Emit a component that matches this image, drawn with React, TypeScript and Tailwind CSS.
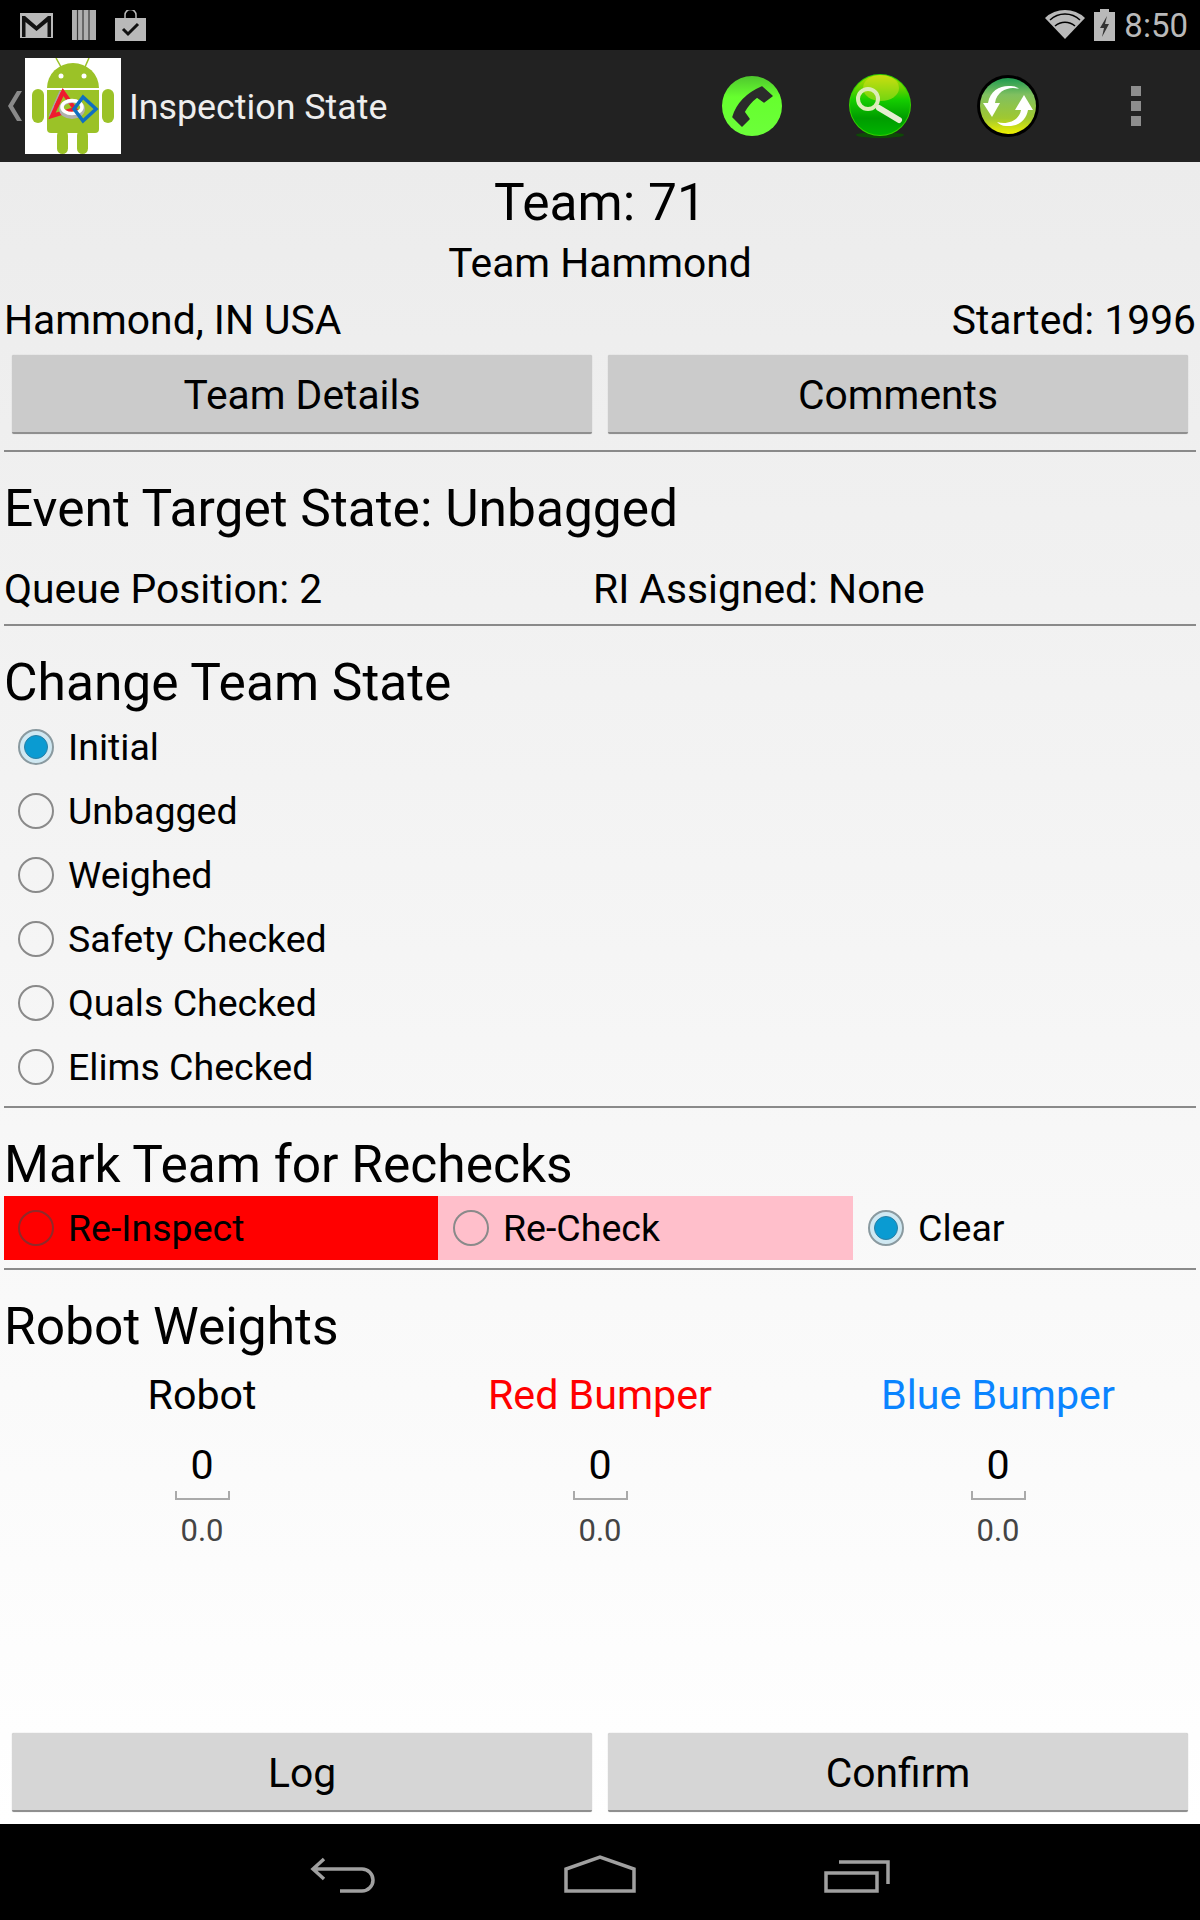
import React from "react";

function Radio({ checked, dark }: { checked?: boolean; dark?: boolean }) {
  if (checked) {
    return (
      <span className="flex h-[36px] w-[36px] shrink-0 items-center justify-center rounded-full border-2 border-[#8a9aa0] bg-[#cfe8f2]">
        <span className="h-[24px] w-[24px] rounded-full border border-[#2a7fa5] bg-[#0a9bd2]" />
      </span>
    );
  }
  return <span className={`h-[36px] w-[36px] shrink-0 rounded-full border-2 ${dark ? "border-[#8f2a2a]" : "border-[#8a8a8a]"}`} />;
}

function RadioRow({ label, checked }: { label: string; checked?: boolean }) {
  return (
    <div className="flex h-[64px] shrink-0 items-center gap-[14px] pl-[18px] text-[37.5px]">
      <Radio checked={checked} />
      <span>{label}</span>
    </div>
  );
}

function Btn({ label, light }: { label: string; light?: boolean }) {
  return (
    <div className={`flex h-[79px] flex-1 items-center justify-center rounded-[2px] border-b-2 border-[#8f8f8f] pt-[4px] text-[40.8px] shadow-[0_0_1px_#aaaaaa] ${light ? "bg-[#d6d6d6]" : "bg-[#cbcbcb]"}`}>
      {label}
    </div>
  );
}

function Rule() {
  return <div className="mx-[4px] h-[2px] shrink-0 bg-[#8a8a8a]" />;
}

function Weight({ label, color }: { label: string; color: string }) {
  return (
    <div className="flex flex-1 flex-col items-center">
      <div className={`flex h-[52px] items-center text-[41.2px] ${color}`}>{label}</div>
      <div className="mt-[19px] flex h-[50px] items-center text-[41.2px]">0</div>
      <div className="h-[9px] w-[55px] border-x-2 border-b-2 border-[#aaaaaa]" />
      <div className="mt-[11px] text-[31px] leading-[40px] text-[#444444]">0.0</div>
    </div>
  );
}

function AppLogo() {
  return (
    <svg viewBox="0 0 96 96" className="h-[96px] w-[96px] shrink-0 bg-white">
      <path d="M31 0l5 9M64 0l-4 9" stroke="#9bc227" strokeWidth="1.500" />
      <path d="M22 30a26 25 0 0 1 52 0z" fill="#9bc227" />
      <circle cx="36" cy="18" r="2.500" fill="#fff" />
      <circle cx="59" cy="18" r="2.500" fill="#fff" />
      <rect x="7" y="31" width="12" height="34" rx="6" fill="#9bc227" />
      <rect x="77" y="31" width="12" height="34" rx="6" fill="#9bc227" />
      <path d="M22 32h52v39a4 4 0 0 1-4 4H26a4 4 0 0 1-4-4z" fill="#9bc227" />
      <rect x="32" y="72" width="11" height="24" rx="5.500" fill="#9bc227" />
      <rect x="52" y="72" width="11" height="24" rx="5.500" fill="#9bc227" />
      <path d="M36 33L25 58" stroke="#a8a8a8" strokeWidth="3" />
      <path d="M38 34L27 58l23-7z" fill="none" stroke="#ee1c2e" strokeWidth="4" />
      <ellipse cx="47" cy="51" rx="11" ry="8" fill="none" stroke="#b0b0b0" strokeWidth="4" />
      <ellipse cx="47" cy="49" rx="10" ry="6.500" fill="none" stroke="#ffffff" strokeWidth="3.500" />
      <path d="M38 34L31 49" stroke="#ee1c2e" strokeWidth="4" />
      <path d="M58 39l13 12-13 12-9-12z" fill="none" stroke="#0f6fc0" strokeWidth="3.500" />
    </svg>
  );
}

function PhoneIcon() {
  return (
    <svg viewBox="0 0 62 62" className="h-[62px] w-[62px]">
      <defs>
        <linearGradient id="ph" x1="0" y1="0" x2="0" y2="1">
          <stop offset="0" stopColor="#4fc62e" />
          <stop offset="0.35" stopColor="#66ff2e" />
          <stop offset="1" stopColor="#6cff3a" />
        </linearGradient>
      </defs>
      <circle cx="31" cy="31" r="30" fill="url(#ph)" />
      <path d="M41 12L51 21 43 27 36 22Q28 28 23 37L28 44 21 51 12 42Q18 22 41 12z" fill="#2b2b2b" stroke="#2b2b2b" strokeWidth="1.500" strokeLinejoin="round" />
    </svg>
  );
}

function SearchIcon() {
  return (
    <svg viewBox="0 0 64 66" className="h-[66px] w-[64px]">
      <defs>
        <linearGradient id="se" x1="0" y1="0" x2="0" y2="1">
          <stop offset="0" stopColor="#c0dc00" />
          <stop offset="0.42" stopColor="#14cc00" />
          <stop offset="0.72" stopColor="#009c00" />
          <stop offset="1" stopColor="#00b400" />
        </linearGradient>
      </defs>
      <ellipse cx="32" cy="62" rx="24" ry="3" fill="#0e4a06" />
      <circle cx="32" cy="32" r="31" fill="#33d000" />
      <circle cx="32" cy="32" r="30" fill="url(#se)" />
      <ellipse cx="33" cy="15" rx="18" ry="13" fill="#d8e020" opacity="0.500" />
      <circle cx="20" cy="26" r="10" fill="none" stroke="#dcecb8" strokeWidth="4" />
      <path d="M31 35l20 12" stroke="#e6eed2" strokeWidth="6" strokeLinecap="round" />
    </svg>
  );
}

function RefreshIcon() {
  return (
    <svg viewBox="0 0 62 62" className="h-[62px] w-[62px]">
      <defs>
        <linearGradient id="re" x1="0" y1="0" x2="0" y2="1">
          <stop offset="0" stopColor="#1e9a50" />
          <stop offset="0.3" stopColor="#80c060" />
          <stop offset="0.72" stopColor="#a0c830" />
          <stop offset="1" stopColor="#f0f000" />
        </linearGradient>
      </defs>
      <circle cx="31" cy="31" r="31" fill="#000" />
      <circle cx="31" cy="31" r="28" fill="url(#re)" />
      <path d="M11 28C13 15 24 10 34 11c3 0 6 1 8 3-9-3-22 1-24 14z" fill="#fff" />
      <path d="M6 28h17l-8 14z" fill="#fff" />
      <path d="M51 35C49 47 39 52 29 51c-4 0-7-2-9-4 10 3 22-1 24-12z" fill="#fff" />
      <path d="M38 35l9-15 9 15z" fill="#fff" />
    </svg>
  );
}

function Overflow() {
  return (
    <div className="flex flex-col gap-[5px]">
      <span className="h-[10px] w-[10px] bg-[#8e8e8e]" />
      <span className="h-[10px] w-[10px] bg-[#8e8e8e]" />
      <span className="h-[10px] w-[10px] bg-[#8e8e8e]" />
    </div>
  );
}

export default function App() {
  return (
    <div className="flex h-[1920px] w-[1200px] flex-col overflow-hidden bg-black text-black" style={{ fontFamily: "Roboto, sans-serif" }}>
      {/* status bar */}
      <div className="flex h-[50px] shrink-0 items-center justify-between pl-[20px] pr-[12px]">
        <div className="flex items-center gap-[19px]">
          <svg viewBox="0 0 33 25" className="h-[25px] w-[33px]">
            <rect width="33" height="25" fill="#b9b9b9" />
            <path d="M2 24V3h3l11.500 10L28 3h3v21h-3.500V9L16.500 18 5.500 9v15z" fill="#111" />
          </svg>
          <svg viewBox="0 0 24 30" className="h-[30px] w-[24px]">
            <path d="M0 0h24v30H0z" fill="#b0b0b0" />
            <path d="M5.500 0v30M11 0v30M17 0v30" stroke="#3a3a3a" strokeWidth="1.200" />
          </svg>
          <svg viewBox="0 0 31 31" className="h-[31px] w-[31px]">
            <path d="M10 8V5a5.500 5.500 0 0 1 11 0v3" fill="none" stroke="#b9b9b9" strokeWidth="1.500" />
            <path d="M0 8h31v23H0z" fill="#b9b9b9" />
            <path d="M8 19l5 5 10-10" fill="none" stroke="#111" strokeWidth="3" />
          </svg>
        </div>
        <div className="flex items-center gap-[9px]">
          <svg viewBox="0 0 40 30" className="h-[30px] w-[40px]">
            <path d="M20 29L0 8a29 29 0 0 1 40 0z" fill="#b9b9b9" />
            <path d="M5 10a22 22 0 0 1 30 0M10 16a15 15 0 0 1 20 0" fill="none" stroke="#000" strokeWidth="1.500" />
          </svg>
          <svg viewBox="0 0 21 32" className="h-[32px] w-[21px]">
            <path d="M6 0h9v3h6v29H0V3h6z" fill="#b9b9b9" />
            <path d="M13 7L6 19h4l-2 9 7-13h-4z" fill="#333" />
          </svg>
          <span className="text-[33px] leading-none text-[#b9b9b9]">8:50</span>
        </div>
      </div>

      {/* action bar */}
      <div className="flex h-[112px] shrink-0 items-center bg-[#222222]">
        <svg viewBox="0 0 14 30" className="ml-[8px] mr-[3px] h-[30px] w-[14px]">
          <path d="M14 0L5 15l9 15H9L0 15 9 0z" fill="#8a8a8a" />
        </svg>
        <AppLogo />
        <span className="ml-[8px] pt-[4px] text-[35.8px] text-[#eeeeee]">Inspection State</span>
        <div className="ml-auto flex items-center">
          <div className="flex w-[128px] justify-center"><PhoneIcon /></div>
          <div className="flex w-[128px] justify-center"><SearchIcon /></div>
          <div className="flex w-[128px] justify-center"><RefreshIcon /></div>
          <div className="flex w-[128px] justify-center"><Overflow /></div>
        </div>
      </div>

      {/* content */}
      <div className="flex min-h-0 flex-1 flex-col bg-linear-to-b from-[#ececec] to-white">
        <div className="flex h-[80px] shrink-0 items-center justify-center pt-[2px] text-[51.5px]">Team: 71</div>
        <div className="flex h-[42px] shrink-0 items-center justify-center pt-[2px] text-[40.8px]">Team Hammond</div>
        <div className="flex h-[71px] shrink-0 items-center justify-between px-[4px] pt-[2px] text-[40.8px]">
          <span>Hammond, IN USA</span>
          <span>Started: 1996</span>
        </div>
        <div className="flex shrink-0 gap-[16px] px-[12px]"><Btn label="Team Details" /><Btn label="Comments" /></div>
        <div className="mt-[16px]"><Rule /></div>
        <div className="flex h-[111px] shrink-0 items-center px-[4px] pt-[2px] text-[51.5px]">Event Target State: Unbagged</div>
        <div className="mb-[9px] flex h-[52px] shrink-0 items-center px-[4px] pt-[2px] text-[40.8px]">
          <span className="w-[589px]">Queue Position: 2</span>
          <span>RI Assigned: None</span>
        </div>
        <Rule />
        <div className="flex h-[89px] shrink-0 items-center px-[4px] pt-[24px] text-[51.5px]">Change Team State</div>
        <RadioRow label="Initial" checked />
        <RadioRow label="Unbagged" />
        <RadioRow label="Weighed" />
        <RadioRow label="Safety Checked" />
        <RadioRow label="Quals Checked" />
        <RadioRow label="Elims Checked" />
        <div className="mt-[7px]"><Rule /></div>
        <div className="flex h-[88px] shrink-0 items-center px-[4px] pt-[25px] text-[51.5px]">Mark Team for Rechecks</div>
        <div className="flex h-[64px] shrink-0 pl-[4px] text-[37.5px]">
          <div className="flex w-[434px] items-center gap-[14px] bg-[#ff0000] pl-[14px]"><Radio dark /><span>Re-Inspect</span></div>
          <div className="flex w-[415px] items-center gap-[14px] bg-[#ffbfcb] pl-[15px]"><Radio /><span>Re-Check</span></div>
          <div className="flex items-center gap-[14px] pl-[15px]"><Radio checked /><span>Clear</span></div>
        </div>
        <div className="mt-[8px]"><Rule /></div>
        <div className="flex h-[100px] shrink-0 items-center px-[4px] pt-[14px] text-[51.5px]">Robot Weights</div>
        <div className="flex shrink-0 px-[3px]">
          <Weight label="Robot" color="text-black" />
          <Weight label="Red Bumper" color="text-[#ff0000]" />
          <Weight label="Blue Bumper" color="text-[#0a84ff]" />
        </div>
        <div className="mt-auto flex shrink-0 gap-[16px] px-[12px] pb-[12px]"><Btn label="Log" light /><Btn label="Confirm" light /></div>
      </div>

      {/* navigation bar */}
      <div className="flex h-[96px] shrink-0 items-end justify-center gap-[188px] pb-[27px]">
        <svg viewBox="0 0 66 36" className="h-[36px] w-[66px]" fill="none" stroke="#a0a0a0" strokeWidth="3.500">
          <path d="M14 2L3 12l11 10M3 12h49a11 11 0 0 1 0 22H30" />
        </svg>
        <svg viewBox="0 0 72 38" className="h-[38px] w-[72px]" fill="none" stroke="#a0a0a0" strokeWidth="3.500">
          <path d="M2 36V14L36 2 70 14V36z" />
        </svg>
        <svg viewBox="0 0 66 33" className="h-[33px] w-[66px]" fill="none" stroke="#a0a0a0" strokeWidth="3.500">
          <path d="M2 13h51v18H2zM15 2h49v22" />
        </svg>
      </div>
    </div>
  );
}
